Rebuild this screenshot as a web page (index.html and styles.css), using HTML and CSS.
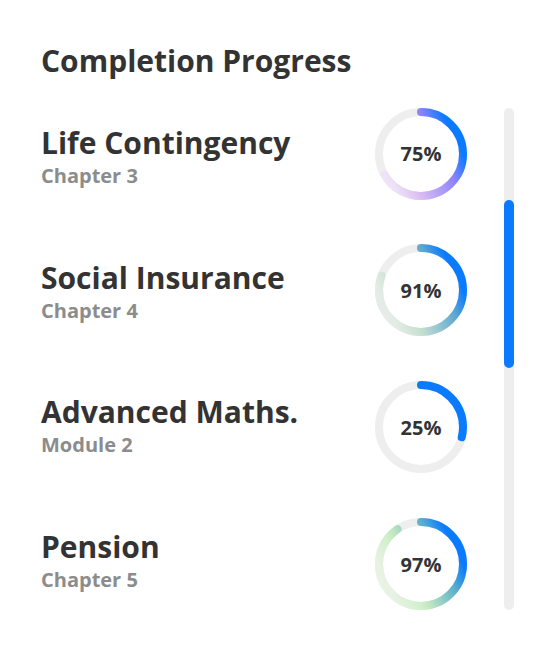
FILE: index.html
```html
<!DOCTYPE html>
<html>
<head>
<meta charset="utf-8">
<link rel="stylesheet" href="styles.css">
</head>
<body>
<div class="panel">
  <h1 class="title">Completion Progress</h1>
  <div class="content">
    <div class="texts">
      <div class="info">
        <div class="name">Life Contingency</div>
        <div class="sub">Chapter 3</div>
      </div>
      <div class="info">
        <div class="name">Social Insurance</div>
        <div class="sub">Chapter 4</div>
      </div>
      <div class="info">
        <div class="name">Advanced Maths.</div>
        <div class="sub">Module 2</div>
      </div>
      <div class="info">
        <div class="name">Pension</div>
        <div class="sub">Chapter 5</div>
      </div>
    </div>
    <div class="rings">
      <div class="ring">
        <svg width="92" height="92" viewBox="0 0 92 92">
          <defs>
            <linearGradient id="g1" gradientUnits="userSpaceOnUse" x1="0" y1="70" x2="92" y2="24">
              <stop offset="0" stop-color="#f3eaf8"/>
              <stop offset="0.14" stop-color="#ece0f6"/>
              <stop offset="0.32" stop-color="#d9bcf1"/>
              <stop offset="0.69" stop-color="#8a82fc"/>
              <stop offset="0.87" stop-color="#0a7aff"/>
              <stop offset="1" stop-color="#0a7aff"/>
            </linearGradient>
          </defs>
          <circle class="track" cx="46" cy="46" r="42"/>
          <path class="arc" d="M46 4 A42 42 0 1 1 46 88 A42 42 0 1 1 46 4" stroke="url(#g1)" stroke-dasharray="176 400"/>
        </svg>
        <span class="pct">75%</span>
      </div>
      <div class="ring">
        <svg width="92" height="92" viewBox="0 0 92 92">
          <defs>
            <linearGradient id="g2" gradientUnits="userSpaceOnUse" x1="0" y1="70" x2="92" y2="24">
              <stop offset="0" stop-color="#ececec"/>
              <stop offset="0.14" stop-color="#e2ece4"/>
              <stop offset="0.32" stop-color="#c6e0d0"/>
              <stop offset="0.69" stop-color="#5ea8d2"/>
              <stop offset="0.87" stop-color="#0a7aff"/>
              <stop offset="1" stop-color="#0a7aff"/>
            </linearGradient>
          </defs>
          <circle class="track" cx="46" cy="46" r="42"/>
          <path class="arc" d="M46 4 A42 42 0 1 1 46 88 A42 42 0 1 1 46 4" stroke="url(#g2)" stroke-dasharray="212.2 400"/>
        </svg>
        <span class="pct">91%</span>
      </div>
      <div class="ring">
        <svg width="92" height="92" viewBox="0 0 92 92">
          <circle class="track" cx="46" cy="46" r="42"/>
          <path class="arc" d="M46 4 A42 42 0 1 1 46 88 A42 42 0 1 1 46 4" stroke="#0a7aff" stroke-dasharray="76.2 400"/>
        </svg>
        <span class="pct">25%</span>
      </div>
      <div class="ring">
        <svg width="92" height="92" viewBox="0 0 92 92">
          <defs>
            <linearGradient id="g4" gradientUnits="userSpaceOnUse" x1="0" y1="70" x2="92" y2="24">
              <stop offset="0" stop-color="#edf4ea"/>
              <stop offset="0.14" stop-color="#e6f2e2"/>
              <stop offset="0.32" stop-color="#d0f0cc"/>
              <stop offset="0.4" stop-color="#c2e6c0"/>
              <stop offset="0.69" stop-color="#5ab0cc"/>
              <stop offset="0.87" stop-color="#0a7aff"/>
              <stop offset="1" stop-color="#0a7aff"/>
            </linearGradient>
          </defs>
          <circle class="track" cx="46" cy="46" r="42"/>
          <path class="arc" d="M46 4 A42 42 0 1 1 46 88 A42 42 0 1 1 46 4" stroke="url(#g4)" stroke-dasharray="238.6 400"/>
        </svg>
        <span class="pct">97%</span>
      </div>
    </div>
    <div class="scrollbar">
      <div class="thumb"></div>
    </div>
  </div>
</div>
</body>
</html>
```
FILE: styles.css
```css
* { box-sizing: border-box; }
html, body { margin: 0; padding: 0; background: #ffffff; }
body {
  font-family: "Open Sans", "Noto Sans", sans-serif;
  color: #333333;
  width: 546px;
  height: 660px;
}
.panel {
  padding: 41px 0 0 41px;
}
.title {
  margin: 0;
  font-size: 30px;
  line-height: 40px;
  font-weight: 700;
  color: #333333;
}
.content {
  display: flex;
  align-items: flex-start;
  margin-top: 4px;
}
.texts {
  display: flex;
  flex-direction: column;
  gap: 70.7px;
  width: 334px;
  padding-top: 40px;
  flex: none;
}
.info {
  display: flex;
  flex-direction: column;
}
.name {
  font-size: 30px;
  line-height: 36px;
  font-weight: 700;
  color: #333333;
}
.sub {
  margin-top: 2px;
  font-size: 20px;
  line-height: 26px;
  font-weight: 700;
  color: #8c8c8c;
}
.rings {
  display: flex;
  flex-direction: column;
  gap: 44.8px;
  padding-top: 22.7px;
  flex: none;
}
.ring {
  position: relative;
  width: 92px;
  height: 92px;
}
.ring svg { display: block; }
.track {
  fill: none;
  stroke: #eeeeee;
  stroke-width: 8;
}
.arc {
  fill: none;
  stroke-width: 8;
  stroke-linecap: round;
}
.pct {
  position: absolute;
  inset: 0;
  display: flex;
  align-items: center;
  justify-content: center;
  font-size: 20px;
  font-weight: 700;
  color: #333333;
}
.scrollbar {
  margin-left: 37px;
  margin-top: 23px;
  width: 10px;
  height: 502px;
  border-radius: 5px;
  background: #eeeeee;
  position: relative;
  flex: none;
}
.thumb {
  position: absolute;
  left: 0;
  top: 92px;
  width: 10px;
  height: 168px;
  border-radius: 5px;
  background: #0a7aff;
}
```
